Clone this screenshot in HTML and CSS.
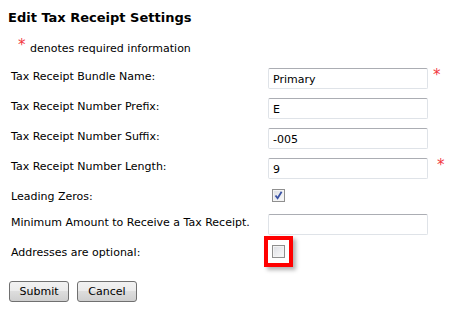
FILE: index.html
```html
<!DOCTYPE html>
<html lang="en">
<head>
  <meta charset="UTF-8"/>
  <title>Edit Tax Receipt Settings</title>
  <link rel="stylesheet" href="styles.css">
</head>
<body>
  <div class="page">
    <h2 class="title">Edit Tax Receipt Settings</h2>
    <div class="note"><span class="req">*</span> denotes required information</div>

    <div class="form">
      <div class="row">
        <label class="label">Tax Receipt Bundle Name:</label>
        <div class="field"><input class="text" type="text" value="Primary"/><span class="req req-side">*</span></div>
      </div>
      <div class="row">
        <label class="label">Tax Receipt Number Prefix:</label>
        <div class="field"><input class="text" type="text" value="E"/></div>
      </div>
      <div class="row">
        <label class="label">Tax Receipt Number Suffix:</label>
        <div class="field"><input class="text" type="text" value="-005"/></div>
      </div>
      <div class="row">
        <label class="label">Tax Receipt Number Length:</label>
        <div class="field"><input class="text" type="text" value="9"/><span class="req req-side req-far">*</span></div>
      </div>
      <div class="row row-check">
        <label class="label">Leading Zeros:</label>
        <div class="field">
          <span class="chk">
            <svg width="9" height="9" viewBox="0 0 9 9"><path d="M1.5 4.5 L3.6 7.2 L7.6 0.8" fill="none" stroke="#3a52a4" stroke-width="1.8"/></svg>
          </span>
        </div>
      </div>
      <div class="row">
        <label class="label">Minimum Amount to Receive a Tax Receipt.</label>
        <div class="field"><input class="text" type="text" value=""/></div>
      </div>
      <div class="row row-check">
        <label class="label">Addresses are optional:</label>
        <div class="field">
          <span class="chk"></span>
          <span class="highlight"></span>
        </div>
      </div>
    </div>

    <div class="actions">
      <button class="btn" type="button">Submit</button>
      <button class="btn" type="button">Cancel</button>
    </div>
  </div>
</body>
</html>
```

FILE: styles.css
```css
* {
  margin: 0;
  padding: 0;
  box-sizing: border-box;
}

body {
  background: #fff;
  color: #000;
  font-family: 'DejaVu Sans', Verdana, sans-serif;
  font-size: 11px;
}

.page {
  padding: 10px 8px;
}

.title {
  font-size: 13px;
  font-weight: bold;
  line-height: 15px;
}

.note {
  margin-top: 12px;
  padding-left: 10px;
  line-height: 16px;
}

.req {
  color: #f2383e;
  font-size: 15px;
  font-weight: normal;
  vertical-align: -2px;
}

.note .req {
  vertical-align: 2px;
  margin-right: 1px;
}

.form {
  margin-top: 10px;
  display: flex;
  flex-direction: column;
}

.row {
  display: grid;
  grid-template-columns: 257px 1fr;
  height: 30px;
  padding-left: 3px;
}

.row-check {
  height: 26px;
}

.label {
  padding-top: 3px;
}

.field {
  display: flex;
  align-items: flex-start;
  gap: 5px;
  position: relative;
}

.text {
  width: 160px;
  height: 21px;
  margin-top: 1px;
  border: 1px solid #dfe3e8;
  border-top-color: #abadb3;
  border-radius: 2px;
  padding: 2px 4px 0;
  font-family: 'DejaVu Sans', Verdana, sans-serif;
  font-size: 11px;
  color: #000;
  outline: none;
}

.req-side {
  line-height: 14px;
  margin-top: 1px;
}

.req-far {
  margin-left: 4px;
}

.chk {
  display: flex;
  align-items: center;
  justify-content: center;
  width: 13px;
  height: 13px;
  margin: 2px 0 0 4px;
  border: 1px solid #8f8f8f;
  background: linear-gradient(135deg, #dcdee3, #fbfbfc);
  box-shadow: inset 0 0 0 1px #f4f4f4;
}

.highlight {
  position: absolute;
  left: -4px;
  top: -7px;
  width: 29px;
  height: 31px;
  border: 4px solid #ff0000;
  box-shadow: 3px 3px 4px rgba(0, 0, 0, 0.3);
  pointer-events: none;
}

.actions {
  display: flex;
  gap: 8px;
  margin-top: 12px;
  padding-left: 1px;
}

.btn {
  width: 60px;
  height: 21px;
  border: 1px solid #707070;
  border-radius: 3px;
  background: linear-gradient(#f2f2f2 0%, #ebebeb 45%, #dddddd 50%, #cfcfcf 100%);
  font-family: 'DejaVu Sans', Verdana, sans-serif;
  font-size: 11px;
  color: #000;
}
```
